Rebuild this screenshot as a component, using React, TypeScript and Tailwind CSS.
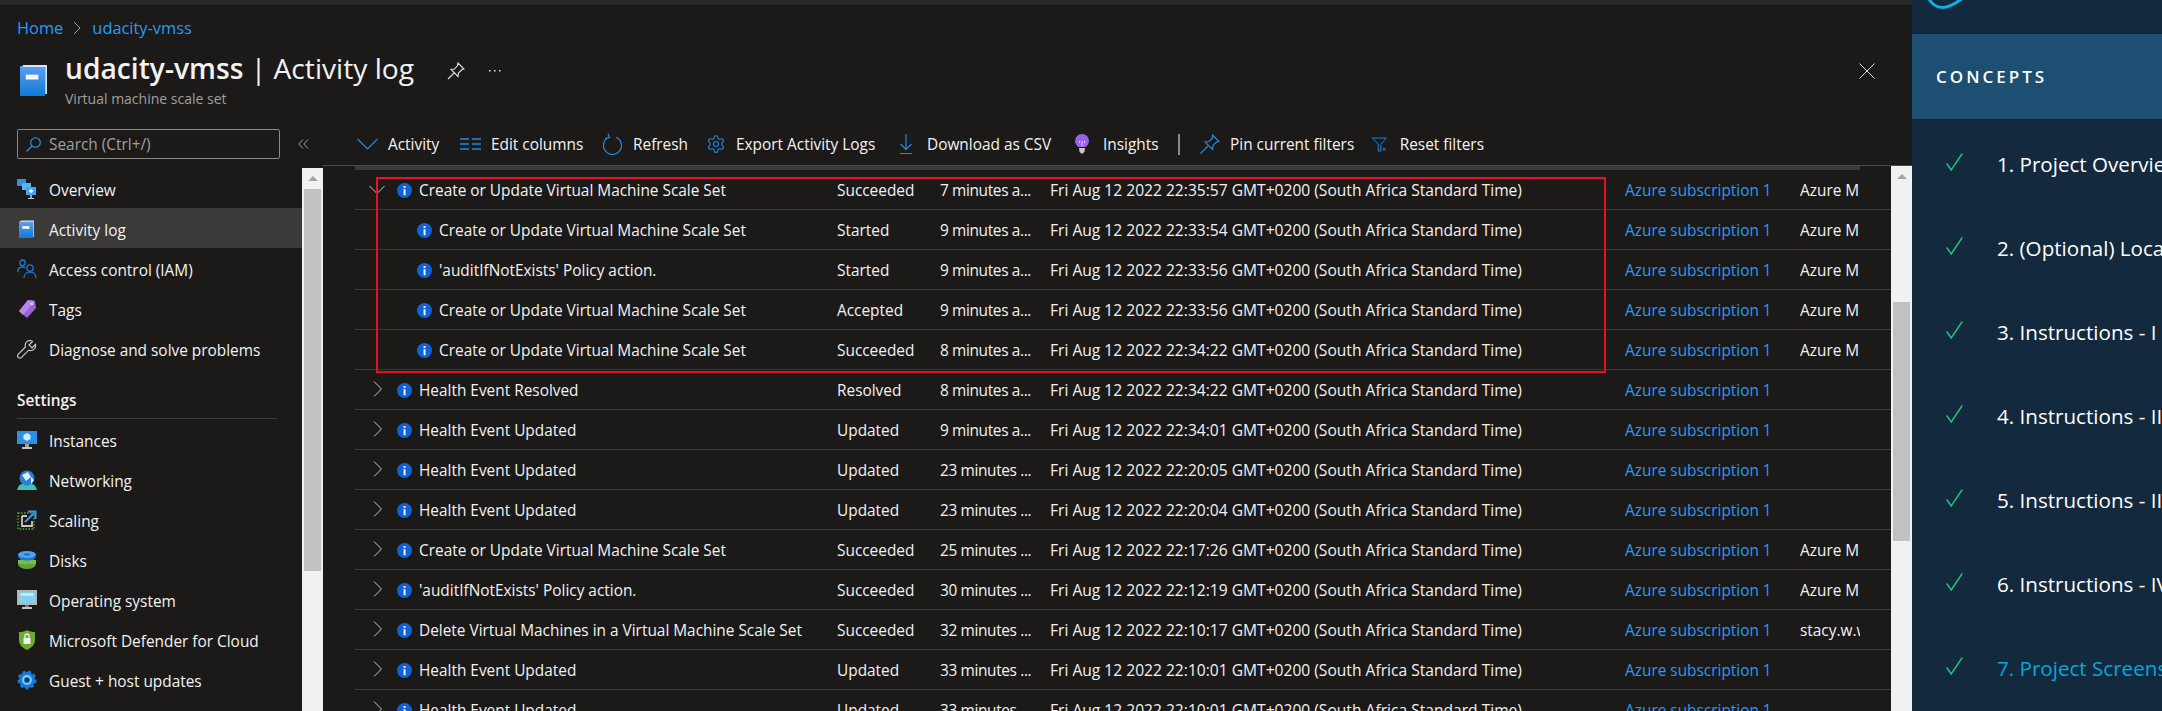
import React from "react";

const Info = () => (
  <svg width="15" height="15" viewBox="0 0 15 15" className="mt-[3px] shrink-0">
    <circle cx="7.5" cy="7.5" r="7.5" fill="#0f62d8" />
    <rect x="6.6" y="6.2" width="1.9" height="6" fill="#fff" />
    <rect x="6.6" y="3" width="1.9" height="1.9" fill="#fff" />
  </svg>
);

const ChevR = () => (
  <svg width="9" height="16" viewBox="0 0 9 16" fill="none" stroke="#c8c6c4" strokeWidth="1" className="shrink-0">
    <path d="M1 .5l7.500 7.500-7.500 7.500" />
  </svg>
);
const ChevD = () => (
  <svg width="16" height="9" viewBox="0 0 16 9" fill="none" stroke="#c8c6c4" strokeWidth="1" className="shrink-0">
    <path d="M.5 1l7.500 7.500L15.500 1" />
  </svg>
);

const Book = ({ s = 1 }: { s?: number }) => (
  <svg width={28 * s} height={33 * s} viewBox="0 0 28 33" className="shrink-0">
    <defs>
      <linearGradient id={"bk" + Math.round(s * 100)} x1="0" y1="0" x2="0" y2="1">
        <stop offset="0" stopColor="#5ea0ef" />
        <stop offset="1" stopColor="#0f7bd6" />
      </linearGradient>
    </defs>
    <rect x="0" y="2" width="26" height="31" rx="1" fill={"url(#bk" + Math.round(s * 100) + ")"} />
    <path d="M3 1h25v30h-2V3H3z" fill="#cfe8fb" />
    <rect x="6" y="11" width="13" height="5" fill="#f4f8fc" />
  </svg>
);

const Icons: Record<string, React.ReactNode> = {
  overview: (
    <svg width="20" height="20" viewBox="0 0 20 20">
      <rect x="0" y="0" width="9" height="7" fill="#2f8fe8" />
      <rect x="5" y="4" width="9" height="7" fill="#59b4ee" />
      <rect x="9" y="8" width="10" height="8" fill="#42a5f0" />
      <path d="M14 10v4M12 12h4" stroke="#fff" strokeWidth="1.3" />
      <rect x="13" y="16" width="2" height="3" fill="#a19f9d" />
      <rect x="11" y="19" width="6" height="1" fill="#c8c6c4" />
    </svg>
  ),
  activity: <div className="pl-[2px]"><Book s={0.55} /></div>,
  iam: (
    <svg width="20" height="20" viewBox="0 0 20 20" fill="none" stroke="#1c78d4" strokeWidth="1.3">
      <circle cx="5.5" cy="3.8" r="2.8" />
      <path d="M0.8 13c0-3 2-5 5-5 1 0 2 .3 2.6.8" />
      <circle cx="13" cy="9" r="3.2" />
      <path d="M7 19c0-3.5 2.5-6 6-6s6 2.500 6 6" />
    </svg>
  ),
  tags: (
    <svg width="20" height="20" viewBox="0 0 20 20">
      <path d="M11 1l7 1 1 7-9 10-8-7z" fill="#9b62d8" />
      <path d="M11 1l7 1-12 14-4-4z" fill="#b488e6" />
      <circle cx="15" cy="5" r="1.300" fill="#e9dcf8" />
    </svg>
  ),
  wrench: (
    <svg width="20" height="20" viewBox="0 0 20 20" fill="none" stroke="#c8c6c4" strokeWidth="1.200">
      <path d="M13 1.300a5 5 0 0 0-4.500 6.700L1.300 15.200a2.200 2.200 0 0 0 3.200 3.200l7.200-7.200A5 5 0 0 0 18.500 5.500L15 9l-3-3 3.500-3.500A5 5 0 0 0 13 1.300z" />
    </svg>
  ),
  instances: (
    <svg width="20" height="20" viewBox="0 0 20 20">
      <rect x="0" y="1" width="20" height="13" fill="#2d8fe8" />
      <path d="M10 3l3.500 2v4L10 11 6.500 9V5z" fill="#cfeafc" />
      <rect x="8" y="14" width="4" height="3" fill="#a19f9d" />
      <rect x="5" y="17" width="10" height="2" fill="#c8c6c4" />
    </svg>
  ),
  network: (
    <svg width="20" height="20" viewBox="0 0 20 20">
      <path d="M0 20c1-4 3-6 5-6h10c2 0 4 2 5 6z" fill="#42c1b0" />
      <circle cx="10" cy="8" r="7.500" fill="#2a7fd8" />
      <path d="M5 5l6-3 3 5-5 4zM14 7l3 3-3 4z" fill="#dff1fc" />
    </svg>
  ),
  scaling: (
    <svg width="20" height="20" viewBox="0 0 20 20" fill="none">
      <rect x="1" y="3" width="16" height="16" stroke="#5ea63a" strokeWidth="1.300" strokeDasharray="1.500 1.500" />
      <path d="M5 6v10h10v-5M5 6h5" stroke="#c8c6c4" strokeWidth="1.800" />
      <path d="M8 12l9-9M11 1.500h7.500V9" stroke="#2f9bf0" strokeWidth="2" />
    </svg>
  ),
  disks: (
    <svg width="20" height="18" viewBox="0 0 20 18">
      <ellipse cx="10" cy="12.500" rx="9" ry="5.500" fill="#5ea63a" />
      <rect x="1" y="9" width="18" height="4" fill="#7cba4b" />
      <ellipse cx="10" cy="5" rx="9" ry="4.500" fill="#1c78d4" />
      <ellipse cx="10" cy="3.500" rx="9" ry="3.500" fill="#4aa3ee" />
      <ellipse cx="10" cy="3.500" rx="3" ry="1" fill="#1c5fa8" />
    </svg>
  ),
  os: (
    <svg width="20" height="20" viewBox="0 0 20 20">
      <rect x="0" y="0" width="20" height="15" fill="#b5b3b1" />
      <rect x="2" y="2" width="16" height="11" fill="#7fd0f2" />
      <rect x="3.500" y="3.500" width="13" height="2" fill="#dff3fc" />
      <rect x="8" y="15" width="4" height="2" fill="#797775" />
      <rect x="5" y="17" width="10" height="2" fill="#c8c6c4" />
    </svg>
  ),
  shield: (
    <div className="pl-[2px]">
      <svg width="16" height="20" viewBox="0 0 16 20">
        <path d="M8 0c2 1.500 5 2 8 2v8c0 5-4 8-8 10-4-2-8-5-8-10V2c3 0 6-.5 8-2z" fill="#6bab2f" />
        <rect x="4.500" y="8" width="7" height="6" fill="#f3f2f1" />
        <path d="M6 8V6a2 2 0 0 1 4 0v2" fill="none" stroke="#f3f2f1" strokeWidth="1.300" />
      </svg>
    </div>
  ),
  guest: (
    <svg width="20" height="20" viewBox="0 0 20 20">
      <circle cx="10" cy="10" r="8" fill="#1c78d4" stroke="#1c78d4" strokeWidth="3" strokeDasharray="3 2.500" />
      <circle cx="10" cy="10" r="7.500" fill="#1c78d4" />
      <circle cx="10" cy="10" r="4" fill="none" stroke="#7fd0f2" strokeWidth="1.800" />
      <circle cx="10" cy="10" r="2.200" fill="#0b3b6c" />
    </svg>
  ),
};

const NavItem = ({ icon, label, active }: { icon: string; label: string; active?: boolean }) => (
  <div className={"flex h-10 items-center pl-[17px] text-[15.4px] text-[#f3f2f1] " + (active ? "bg-[#3b3a39]" : "")}>
    <div className="flex w-[32px] shrink-0 justify-start pt-[2px]">{Icons[icon]}</div>
    <span className="whitespace-nowrap pt-[5px]">{label}</span>
  </div>
);

type R = { name: string; status: string; time: string; date: string; res?: string; child?: boolean; open?: boolean };
const tz = " GMT+0200 (South Africa Standard Time)";
const C = "Create or Update Virtual Machine Scale Set";
const H = "Health Event Updated";
const P = "'auditIfNotExists' Policy action.";
const rows: R[] = [
  { name: C, status: "Succeeded", time: "7 minutes a...", date: "22:35:57", res: "Azure M", open: true },
  { name: C, status: "Started", time: "9 minutes a...", date: "22:33:54", res: "Azure M", child: true },
  { name: P, status: "Started", time: "9 minutes a...", date: "22:33:56", res: "Azure M", child: true },
  { name: C, status: "Accepted", time: "9 minutes a...", date: "22:33:56", res: "Azure M", child: true },
  { name: C, status: "Succeeded", time: "8 minutes a...", date: "22:34:22", res: "Azure M", child: true },
  { name: "Health Event Resolved", status: "Resolved", time: "8 minutes a...", date: "22:34:22" },
  { name: H, status: "Updated", time: "9 minutes a...", date: "22:34:01" },
  { name: H, status: "Updated", time: "23 minutes ...", date: "22:20:05" },
  { name: H, status: "Updated", time: "23 minutes ...", date: "22:20:04" },
  { name: C, status: "Succeeded", time: "25 minutes ...", date: "22:17:26", res: "Azure M" },
  { name: P, status: "Succeeded", time: "30 minutes ...", date: "22:12:19", res: "Azure M" },
  { name: "Delete Virtual Machines in a Virtual Machine Scale Set", status: "Succeeded", time: "32 minutes ...", date: "22:10:17", res: "stacy.w.williams" },
  { name: H, status: "Updated", time: "33 minutes ...", date: "22:10:01" },
  { name: H, status: "Updated", time: "33 minutes ...", date: "22:10:01" },
];

const Row = ({ r }: { r: R }) => (
  <div className="flex h-10 shrink-0 items-center whitespace-nowrap border-b border-[#3b3a39] text-[15.4px] text-[#f3f2f1]">
    <div className={"flex w-[482px] shrink-0 items-center " + (r.child ? "pl-[62px]" : "")}>
      {!r.child && (
        <div className="flex w-[42px] shrink-0 justify-center pl-[2px]">{r.open ? <ChevD /> : <ChevR />}</div>
      )}
      <Info />
      <span className="ml-[7px] pt-[2px]">{r.name}</span>
    </div>
    <div className="w-[103px] shrink-0 pt-[2px]">{r.status}</div>
    <div className="w-[110px] shrink-0 pt-[2px] tracking-[-0.35px]">{r.time}</div>
    <div className="w-[575px] shrink-0 pt-[2px] text-[15.6px]">{"Fri Aug 12 2022 " + r.date + tz}</div>
    <div className="w-[175px] shrink-0 pt-[2px] text-[#2899f5]">Azure subscription 1</div>
    <div className="w-[60px] shrink-0 overflow-hidden pt-[2px]">{r.res}</div>
  </div>
);

const Tool = ({ icon, label, w }: { icon: React.ReactNode; label: string; w: string }) => (
  <div className={"flex shrink-0 items-center whitespace-nowrap " + w}>
    {icon}
    <span>{label}</span>
  </div>
);

const Scrollbar = ({ w, top, h }: { w: string; top: string; h: string }) => (
  <div className={"flex shrink-0 flex-col items-center bg-[#f1f1f1] " + w}>
    <div className="mt-[8px] h-0 w-0 border-x-[5px] border-b-[5px] border-x-transparent border-b-[#a3a3a3]" />
    <div className={"w-[17px] bg-[#c1c1c1] " + top + " " + h} />
  </div>
);

const concepts = [
  "1. Project Overview",
  "2. (Optional) Local Environment",
  "3. Instructions - I",
  "4. Instructions - II",
  "5. Instructions - III",
  "6. Instructions - IV",
  "7. Project Screenshots",
];

export default function App() {
  return (
    <div className="flex h-[711px] w-[2162px] overflow-hidden bg-[#1b1a19] font-['Open_Sans','Liberation_Sans',sans-serif]">
      <div className="flex w-[1912px] shrink-0 flex-col">
        <div className="h-[5px] shrink-0 bg-[#292827]" />
        {/* header */}
        <div className="flex h-[113px] shrink-0 flex-col pl-[17px]">
          <div className="mt-[13px] flex h-5 items-center text-[16.4px] text-[#2899f5]">
            <span>Home</span>
            <svg width="8" height="14" viewBox="0 0 8 14" fill="none" stroke="#a19f9d" className="ml-[10px] mr-[11px]">
              <path d="M1 1l6 6-6 6" />
            </svg>
            <span>udacity-vmss</span>
          </div>
          <div className="mt-[11px] flex">
            <div className="mt-[15px] w-[48px] shrink-0 pl-[3px]">
              <Book s={0.97} />
            </div>
            <div className="flex-1">
              <div className="flex h-[38px] items-center">
                <span className="whitespace-nowrap text-[28.2px] leading-[38px] text-[#f3f2f1]">
                  <span className="font-semibold">udacity-vmss</span> | Activity log
                </span>
                <svg width="18" height="18" viewBox="0 0 18 18" fill="none" stroke="#e1dfdd" strokeWidth="1.100" className="ml-[33px] mt-[5px]">
                  <path d="M11 1l6 6-2 .5-3.500 3.500-.5 3.500L4 7.500l3.500-.5L10.500 3.500zM7 11l-6 6" />
                </svg>
                <svg width="12" height="2" viewBox="0 0 12 2" fill="#e1dfdd" className="ml-[24px] mt-[5px]">
                  <rect x="0" y="0" width="1.500" height="1.500" />
                  <rect x="5" y="0" width="1.500" height="1.500" />
                  <rect x="10" y="0" width="1.500" height="1.500" />
                </svg>
                <svg width="16" height="16" viewBox="0 0 16 16" fill="none" stroke="#e1dfdd" className="ml-auto mr-[37px] mt-[5px]">
                  <path d="M.5.500l15 15M15.500.500l-15 15" />
                </svg>
              </div>
              <div className="mt-[3px] text-[14px] leading-[18px] text-[#a19f9d]">Virtual machine scale set</div>
            </div>
          </div>
        </div>
        {/* body */}
        <div className="flex min-h-0 flex-1">
          <aside className="flex w-[323px] shrink-0 flex-col">
            <div className="flex h-[50px] shrink-0 items-start pl-[17px] pt-[11px]">
              <div className="flex h-[30px] w-[263px] items-center rounded-[2px] border border-[#8a8886] pl-[8px] text-[15.4px] text-[#a19f9d]">
                <svg width="15" height="15" viewBox="0 0 15 15" fill="none" stroke="#2899f5" strokeWidth="1.100" className="mr-[8px]">
                  <circle cx="9.500" cy="5.500" r="4.800" />
                  <path d="M6 9l-5.500 5.500" />
                </svg>
                <span className="pt-[2px]">Search (Ctrl+/)</span>
              </div>
              <svg width="11" height="10" viewBox="0 0 11 10" fill="none" stroke="#a19f9d" className="ml-[18px] mt-[10px]">
                <path d="M5 .5L.8 5 5 9.500M10 .5L5.800 5l4.200 4.500" />
              </svg>
            </div>
            <div className="flex min-h-0 flex-1">
              <nav className="w-[302px] shrink-0">
                <NavItem icon="overview" label="Overview" />
                <NavItem icon="activity" label="Activity log" active />
                <NavItem icon="iam" label="Access control (IAM)" />
                <NavItem icon="tags" label="Tags" />
                <NavItem icon="wrench" label="Diagnose and solve problems" />
                <div className="flex h-[50px] items-end pb-[6px] pl-[17px] text-[15.4px] font-semibold text-[#f3f2f1]">Settings</div>
                <div className="ml-[17px] h-px w-[260px] bg-[#3b3a39]" />
                <NavItem icon="instances" label="Instances" />
                <NavItem icon="network" label="Networking" />
                <NavItem icon="scaling" label="Scaling" />
                <NavItem icon="disks" label="Disks" />
                <NavItem icon="os" label="Operating system" />
                <NavItem icon="shield" label="Microsoft Defender for Cloud" />
                <NavItem icon="guest" label="Guest + host updates" />
              </nav>
              <Scrollbar w="w-[21px]" top="mt-[8px]" h="h-[382px]" />
            </div>
          </aside>
          <main className="flex min-w-0 flex-1 flex-col">
            <div className="flex h-[47px] shrink-0 items-center pl-[34px] pt-[6px] text-[15.4px] text-[#f3f2f1]">
              <Tool
                w="w-[103px]"
                label="Activity"
                icon={
                  <svg width="21" height="12" viewBox="0 0 21 12" fill="none" stroke="#2488e0" strokeWidth="1.200" className="mr-[10px]">
                    <path d="M.5 1l10 10 10-10" />
                  </svg>
                }
              />
              <Tool
                w="w-[143px]"
                label="Edit columns"
                icon={
                  <svg width="21" height="12" viewBox="0 0 21 12" fill="none" stroke="#2488e0" strokeWidth="1.300" className="mr-[10px]">
                    <path d="M0 1h9M12 1h9M0 6h9M12 6h9M0 11h9M12 11h9" />
                  </svg>
                }
              />
              <Tool
                w="w-[103px]"
                label="Refresh"
                icon={
                  <svg width="20" height="22" viewBox="0 0 20 22" fill="none" stroke="#2488e0" strokeWidth="1.200" className="mr-[10px]">
                    <path d="M6 4.200a9 9 0 1 0 7 0M5 .5l1.500 4L2 5.500" />
                  </svg>
                }
              />
              <Tool
                w="w-[193px]"
                label="Export Activity Logs"
                icon={
                  <svg width="20" height="20" viewBox="0 0 24 24" fill="none" stroke="#2488e0" strokeWidth="1.300" className="mr-[10px]">
                    <path d="M12.220 2h-.44a2 2 0 0 0-2 2v.18a2 2 0 0 1-1 1.730l-.43.250a2 2 0 0 1-2 0l-.15-.080a2 2 0 0 0-2.730.730l-.22.380a2 2 0 0 0 .73 2.730l.15.100a2 2 0 0 1 1 1.720v.510a2 2 0 0 1-1 1.740l-.15.090a2 2 0 0 0-.73 2.730l.22.380a2 2 0 0 0 2.730.730l.15-.080a2 2 0 0 1 2 0l.43.250a2 2 0 0 1 1 1.730V20a2 2 0 0 0 2 2h.44a2 2 0 0 0 2-2v-.18a2 2 0 0 1 1-1.730l.43-.250a2 2 0 0 1 2 0l.15.080a2 2 0 0 0 2.730-.730l.22-.390a2 2 0 0 0-.73-2.730l-.15-.080a2 2 0 0 1-1-1.740v-.500a2 2 0 0 1 1-1.740l.15-.090a2 2 0 0 0 .73-2.730l-.22-.380a2 2 0 0 0-2.730-.730l-.15.080a2 2 0 0 1-2 0l-.43-.250a2 2 0 0 1-1-1.730V4a2 2 0 0 0-2-2z" />
                    <circle cx="12" cy="12" r="3" />
                  </svg>
                }
              />
              <Tool
                w="w-[175px]"
                label="Download as CSV"
                icon={
                  <svg width="14" height="20" viewBox="0 0 14 20" fill="none" stroke="#2488e0" strokeWidth="1.200" className="mr-[14px]">
                    <path d="M7 0v15M1.500 10L7 15.500l5.500-5.500M1 19.500h12" />
                  </svg>
                }
              />
              <Tool
                w="w-[104px]"
                label="Insights"
                icon={
                  <svg width="16" height="20" viewBox="0 0 16 20" className="mr-[13px]">
                    <path d="M8 0a7 7 0 0 1 7 7c0 3-2 4-3 6H4C3 11 1 10 1 7a7 7 0 0 1 7-7z" fill="#9b62e8" />
                    <path d="M5.500 7v2M10.500 7v2M8 7v5" stroke="#e3d3f8" strokeWidth="1" />
                    <path d="M5 14h6l-.5 3.500-1.500 2H7l-1.500-2z" fill="#c8c6c4" />
                  </svg>
                }
              />
              <div className="h-[21px] w-[2px] shrink-0 bg-[#8a8886]" />
              <Tool
                w="ml-[20px] w-[172px]"
                label="Pin current filters"
                icon={
                  <svg width="20" height="20" viewBox="0 0 20 20" fill="none" stroke="#2488e0" strokeWidth="1.200" className="mr-[10px]">
                    <path d="M12.500 1l6.500 6.500-2.500.5-3.500 3.500-.5 4L5 8l4-.5L12.500 4zM8 12l-7.500 7.500" />
                  </svg>
                }
              />
              <Tool
                w="w-[112px]"
                label="Reset filters"
                icon={
                  <svg width="20" height="19" viewBox="0 0 20 19" fill="none" stroke="#2488e0" strokeWidth="1.300" className="mr-[13px]">
                    <path d="M.5.700h19L12 9v9.500H8.500V9z" />
                    <path d="M14.500 14l4 4M18.500 14l-4 4" />
                  </svg>
                }
              />
            </div>
            <div className="flex min-h-0 flex-1 border-t border-[#4a4948]">
              <div className="relative flex min-h-0 w-[1568px] shrink-0 flex-col">
                <div className="ml-[32px] h-[4px] w-[1505px] shrink-0 bg-[#3b3a39]" />
                <div className="ml-[32px] flex flex-col">
                  {rows.map((r, i) => (
                    <Row key={i} r={r} />
                  ))}
                </div>
                <div className="absolute left-[53px] top-[11px] h-[196px] w-[1230px] border-2 border-[#e81123]" />
              </div>
              <Scrollbar w="w-[21px]" top="mt-[123px]" h="h-[239px]" />
            </div>
          </main>
        </div>
      </div>
      <aside className="flex w-[250px] shrink-0 flex-col bg-[#12293e] text-[#fff]">
        <div className="h-[33px] shrink-0 overflow-hidden pl-[14px]">
          <svg width="38" height="12" viewBox="0 0 38 12" fill="none" stroke="#0fb1e2" strokeWidth="3">
            <path d="M2-3C5 4 11 7.500 16 7.500 22 7.500 29 4 37-2" />
          </svg>
        </div>
        <div className="flex h-[87px] shrink-0 items-center border-y border-[#0f2434] bg-[#1c4f72] pl-[24px] text-[17px] font-semibold tracking-[3px]">
          CONCEPTS
        </div>
        <div className="flex flex-col pt-px">
          {concepts.map((c, i) => (
            <div key={c} className="flex h-[84px] shrink-0 items-center whitespace-nowrap pl-[34px] text-[20.6px]">
              <svg width="17" height="18" viewBox="0 0 17 18" fill="none" stroke="#1fc078" strokeWidth="1.500" className="mb-[2px] mr-[34px] shrink-0">
                <path d="M.7 10.500l4.500 6.500L16.300 .5" />
              </svg>
              <span className={"pt-[2px] " + (i === 6 ? "text-[#02a7dc]" : "text-[#fff]")}>{c}</span>
            </div>
          ))}
        </div>
      </aside>
    </div>
  );
}
